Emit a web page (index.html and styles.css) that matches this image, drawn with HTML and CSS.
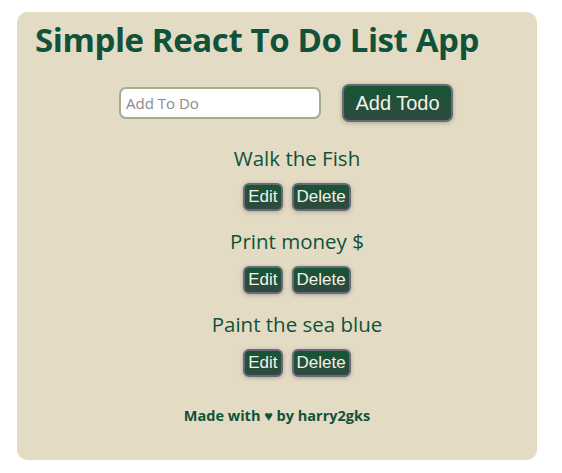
FILE: index.html
```html
<!DOCTYPE html>
<html lang="en">
<head>
<meta charset="utf-8">
<title>Simple React To Do List App</title>
<link rel="stylesheet" href="styles.css">
</head>
<body>
<div class="page">
  <main class="card">
    <h1 class="title">Simple React To Do List App</h1>
    <form class="add-row">
      <input class="add-input" type="text" placeholder="Add To Do">
      <button class="btn btn-add" type="button">Add Todo</button>
    </form>
    <ul class="list">
      <li class="item">
        <div class="item-text">Walk the Fish</div>
        <div class="item-actions">
          <button class="btn btn-small" type="button">Edit</button>
          <button class="btn btn-small" type="button">Delete</button>
        </div>
      </li>
      <li class="item">
        <div class="item-text">Print money $</div>
        <div class="item-actions">
          <button class="btn btn-small" type="button">Edit</button>
          <button class="btn btn-small" type="button">Delete</button>
        </div>
      </li>
      <li class="item">
        <div class="item-text">Paint the sea blue</div>
        <div class="item-actions">
          <button class="btn btn-small" type="button">Edit</button>
          <button class="btn btn-small" type="button">Delete</button>
        </div>
      </li>
    </ul>
    <footer class="footer">Made with ♥ by harry2gks</footer>
  </main>
</div>
</body>
</html>
```

FILE: styles.css
```css
* { box-sizing: border-box; }

body {
  margin: 0;
  background: #ffffff;
  font-family: "Open Sans", "Noto Sans", sans-serif;
  color: #10523a;
}

.page {
  padding: 12px 25px 0 17px;
}

.card {
  width: 520px;
  background: #e3dbc4;
  border-radius: 10px;
  padding: 8px 0 34px 0;
  text-align: center;
}

.title {
  margin: 0;
  padding-right: 40px;
  font-size: 33px;
  line-height: 40px;
  font-weight: 700;
  color: #10523a;
  letter-spacing: -0.4px;
}

.add-row {
  margin: 24px 0 0 0;
  padding-left: 18px;
  display: flex;
  justify-content: center;
  align-items: center;
  gap: 21px;
  height: 38px;
}

.add-input {
  width: 202px;
  height: 32px;
  border: 2px solid #a4ae8c;
  border-radius: 7px;
  background: #ffffff;
  padding: 0 5px;
  font-family: "Open Sans", "Noto Sans", sans-serif;
  font-size: 15px;
  color: #333;
  outline: none;
}

.add-input::placeholder {
  color: #8a8a8a;
}

.btn {
  font-family: "Liberation Sans", Arial, sans-serif;
  color: #f4f1e8;
  background: linear-gradient(180deg, #155634 0%, #2f4a3f 100%);
  border: 2px solid #6b6979;
  border-radius: 7px;
  box-shadow: 0 1px 4px rgba(60, 60, 60, 0.35);
  cursor: pointer;
}

.btn-add {
  width: 111px;
  height: 38px;
  font-size: 20px;
  padding: 0;
}

.list {
  list-style: none;
  margin: 21px 0 0 0;
  padding: 0 0 0 40px;
}

.item + .item {
  margin-top: 15px;
}

.item-text {
  height: 30px;
  line-height: 30px;
  font-size: 20.5px;
}

.item-actions {
  margin-top: 10px;
  display: flex;
  justify-content: center;
  gap: 9px;
}

.btn-small {
  height: 28px;
  font-size: 17px;
  padding: 0 3px;
  border-radius: 6px;
}

.footer {
  margin-top: 29px;
  height: 20px;
  line-height: 20px;
  font-size: 14.5px;
  font-weight: 700;
}
```
